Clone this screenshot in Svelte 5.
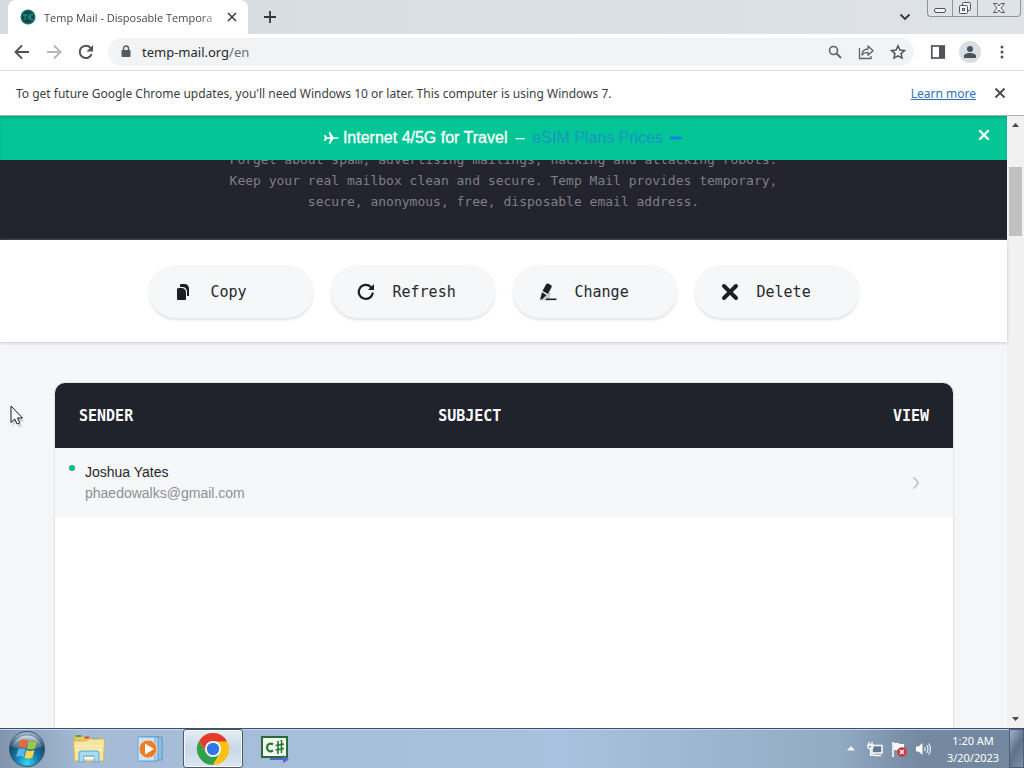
<script>
  const mails = [{ name: 'Joshua Yates', address: 'phaedowalks@gmail.com', subject: '' }];
</script>

<div class="desktop">
  <header class="tabstrip">
    <div class="tab">
      <svg class="favicon" width="16" height="16" viewBox="0 0 16 16" aria-hidden="true">
        <circle cx="8" cy="8" r="7.5" fill="#17736b" />
        <circle cx="8" cy="8" r="6" fill="#134447" />
        <path d="M3 6h4M5 6v5M8.500 10.500v-5M8.500 8h2M13 5.500h-2.500v5H13" fill="none" stroke="#1c8f82" stroke-width="1.300" />
      </svg>
      <span class="tab-title">Temp Mail - Disposable Tempora</span>
      <button class="plain tab-close" aria-label="Close tab">
        <svg width="10" height="10" viewBox="0 0 10 10"><path d="M1 1l8 8M9 1L1 9" stroke="#3c4043" stroke-width="1.6" /></svg>
      </button>
    </div>
    <button class="plain new-tab" aria-label="New tab">
      <svg width="12" height="12" viewBox="0 0 12 12"><path d="M6 0v12M0 6h12" stroke="#33373d" stroke-width="1.8" /></svg>
    </button>
    <button class="plain tab-search" aria-label="Search tabs">
      <svg width="12" height="8" viewBox="0 0 12 8"><path d="M1.5 1.5L6 6l4.500-4.500" fill="none" stroke="#33373d" stroke-width="1.8" /></svg>
    </button>
    <div class="window-controls">
      <button aria-label="Minimize">
        <svg width="14" height="14" viewBox="0 0 14 14"><rect x="1.500" y="7.500" width="11" height="4" rx="1.500" fill="#f2f4f6" stroke="#50565d" /></svg>
      </button>
      <button aria-label="Restore">
        <svg width="14" height="14" viewBox="0 0 14 14"><rect x="4.500" y="1.500" width="8" height="8" rx="1" fill="#eef0f3" stroke="#50565d" /><rect x="1.500" y="4.500" width="8" height="8" rx="1" fill="#f6f7f8" stroke="#50565d" /><rect x="4.500" y="7.500" width="2" height="2" fill="none" stroke="#50565d" /></svg>
      </button>
      <button class="wide" aria-label="Close window">
        <svg width="14" height="14" viewBox="0 0 14 14"><path d="M1.500 2.500h3.500L7 5l2-2.500h3.500L9 7l3.500 4.500H9L7 9l-2 2.500H1.500L5 7z" fill="#f2f4f6" stroke="#50565d" /></svg>
      </button>
    </div>
  </header>

  <nav class="toolbar" aria-label="Browser toolbar">
    <button class="plain" aria-label="Back">
      <svg width="16" height="16" viewBox="0 0 16 16"><path d="M15 8H2M8 1.500L1.500 8 8 14.500" fill="none" stroke="#50545a" stroke-width="1.900" /></svg>
    </button>
    <button class="plain" aria-label="Forward">
      <svg width="16" height="16" viewBox="0 0 16 16"><path d="M1 8h13M8 1.500L14.500 8 8 14.500" fill="none" stroke="#b4b6b9" stroke-width="1.900" /></svg>
    </button>
    <button class="plain" aria-label="Reload">
      <svg width="16" height="16" viewBox="0 0 16 16"><path d="M13.700 10.200A6.200 6.200 0 1 1 12.600 3.800L14 5.200" fill="none" stroke="#50545a" stroke-width="2" /><path d="M15 1v6.500H8.500z" fill="#50545a" /></svg>
    </button>
    <div class="omnibox">
      <svg width="10" height="14" viewBox="0 0 10 14" aria-hidden="true"><rect x="0.500" y="5" width="9" height="7" rx="1" fill="#55595e" /><path d="M2.500 5.500V3.500a2.500 2.500 0 0 1 5 0v2" fill="none" stroke="#55595e" stroke-width="1.400" /></svg>
      <a class="url" href="#address">temp-mail.org<span>/en</span></a>
      <button class="plain" aria-label="Zoom">
        <svg width="14" height="14" viewBox="0 0 14 14"><circle cx="5.500" cy="5.500" r="4" fill="none" stroke="#5f6368" stroke-width="1.600" /><path d="M8.500 8.500l4.500 4.500" stroke="#5f6368" stroke-width="1.800" /></svg>
      </button>
      <button class="plain" aria-label="Share">
        <svg width="16" height="16" viewBox="0 0 16 16"><path d="M1.500 4v10.500h11.500V12" fill="none" stroke="#5f6368" stroke-width="1.300" /><path d="M4 11c.3-4 2.500-6 6-6V2l5 4.700-5 4.500V8.300C7.500 8.300 5.500 9 4 11z" fill="none" stroke="#5f6368" stroke-width="1.300" stroke-linejoin="round" /></svg>
      </button>
      <button class="plain" aria-label="Bookmark this page">
        <svg width="16" height="16" viewBox="0 0 16 16"><path d="M8 1.800l1.900 4.200 4.600.5-3.400 3.100.9 4.500L8 11.800l-4 2.300.9-4.500L1.500 6.500 6.100 6z" fill="none" stroke="#50545a" stroke-width="1.500" /></svg>
      </button>
    </div>
    <button class="plain" aria-label="Side panel">
      <svg width="16" height="16" viewBox="0 0 16 16"><rect x="1.800" y="2" width="12.400" height="12" fill="#fff" stroke="#50545a" stroke-width="1.700" /><path d="M9 2h5v12H9z" fill="#50545a" /></svg>
    </button>
    <button class="plain avatar" aria-label="Profile">
      <svg width="14" height="14" viewBox="0 0 14 14"><circle cx="7" cy="4" r="3" fill="#4b525e" /><path d="M1 13v-2c0-2 3-3 6-3s6 1 6 3v2z" fill="#4b525e" /></svg>
    </button>
    <button class="plain" aria-label="Menu">
      <svg width="16" height="16" viewBox="0 0 16 16"><g fill="#50545a"><circle cx="8" cy="3" r="1.500" /><circle cx="8" cy="8" r="1.500" /><circle cx="8" cy="13" r="1.500" /></g></svg>
    </button>
  </nav>

  <div class="infobar">
    <p>To get future Google Chrome updates, you'll need Windows 10 or later. This computer is using Windows 7.</p>
    <a href="#learn">Learn more</a>
    <button class="plain" aria-label="Dismiss">
      <svg width="12" height="12" viewBox="0 0 12 12"><path d="M1.500 1.500l9 9M10.500 1.500l-9 9" stroke="#44484d" stroke-width="1.800" /></svg>
    </button>
  </div>

  <div class="viewport">
    <main>
      <div class="banner">
        <p>
          <svg width="15" height="14" viewBox="0 0 15 14" aria-hidden="true"><path d="M0 4h1.200L3 6.300H6.200L4.700 1h1.300l3.500 5.300H13q1.800 0 1.800.7t-1.800.7H9.500L6 13H4.700l1.500-5.300H3L1.200 10H0l.8-3z" fill="#fff" /></svg>
          <span class="offer">Internet 4/5G for Travel</span>
          <span class="dash">–</span>
          <a href="#esim">eSIM Plans Prices <svg width="13" height="4" viewBox="0 0 13 4" aria-hidden="true"><path d="M0 .5h10l3 1.500-3 1.500H0z" fill="#0f86e0" /></svg></a>
        </p>
        <button class="plain" aria-label="Close banner">
          <svg width="12" height="12" viewBox="0 0 12 12"><path d="M2 2l8 8M10 2l-8 8" stroke="#fff" stroke-width="2.400" stroke-linecap="round" /></svg>
        </button>
      </div>

      <section class="hero">
        <p>Forget about spam, advertising mailings, hacking and attacking robots.<br />Keep your real mailbox clean and secure. Temp Mail provides temporary,<br />secure, anonymous, free, disposable email address.</p>
      </section>

      <section class="actions">
        <button>
          <svg width="18" height="18" viewBox="0 0 18 18"><path d="M6 1h4q4 .5 4 5v7h-2V8.500Q11.500 4 7.500 4H5V2q0-1 1-1z" fill="#1d1f26" /><path d="M3.500 5H7q4 .5 4 5v6q0 1-1 1H3q-1 0-1-1V6.500Q2 5 3.500 5z" fill="#1d1f26" /></svg>
          <span>Copy</span>
        </button>
        <button>
          <svg width="18" height="18" viewBox="0 0 18 18"><path d="M15.800 9.500A7 7 0 1 1 13.800 4L15 5.200" fill="none" stroke="#1d1f26" stroke-width="2.200" /><path d="M17 1v6h-6z" fill="#1d1f26" /></svg>
          <span>Refresh</span>
        </button>
        <button>
          <svg width="18" height="18" viewBox="0 0 18 18"><path d="M1 17.500h9l2-8-3 1z" fill="#c9ccd0" /><path d="M7 1.500Q7.800 0 9 .500l3 1.500q1.200.8.600 2L9 11 3.500 8z" fill="#1d1f26" /><path d="M3 9.200L7.500 12 4 15.500 1 17z" fill="#1d1f26" /><path d="M7 16.300h10.500" stroke="#1d1f26" stroke-width="1.600" /></svg>
          <span>Change</span>
        </button>
        <button>
          <svg width="18" height="18" viewBox="0 0 18 18"><path d="M3 3l12 12M15 3L3 15" stroke="#1d1f26" stroke-width="4" stroke-linecap="round" /></svg>
          <span>Delete</span>
        </button>
      </section>

      <section class="inbox">
        <div class="card">
          <table>
            <thead>
              <tr><th class="sender">Sender</th><th>Subject</th><th class="view">View</th></tr>
            </thead>
            <tbody>
              {#each mails as mail}
                <tr>
                  <td class="from">
                    <div class="from-row">
                      <i class="dot"></i>
                      <div><div class="name">{mail.name}</div><div class="address">{mail.address}</div></div>
                    </div>
                  </td>
                  <td>{mail.subject}</td>
                  <td class="view">
                    <a href="#mail" aria-label="View message">
                      <svg width="8" height="14" viewBox="0 0 8 14"><path d="M1.500 1.500Q5 4 6 7q-1 3-4.500 5.500" fill="none" stroke="#c3c6ca" stroke-width="2" /></svg>
                    </a>
                  </td>
                </tr>
              {/each}
            </tbody>
          </table>
        </div>
      </section>
    </main>
    <div class="scrollbar" aria-hidden="true">
      <svg width="7" height="4" viewBox="0 0 7 4"><path d="M0 4l3.500-4L7 4z" fill="#4a4a4a" /></svg>
      <div class="track"><div class="thumb"></div></div>
      <svg width="7" height="4" viewBox="0 0 7 4"><path d="M0 0l3.500 4L7 0z" fill="#4a4a4a" /></svg>
    </div>
  </div>

  <footer class="taskbar">
    <button class="plain start" aria-label="Start">
      <svg width="38" height="38" viewBox="0 0 38 38">
        <defs>
          <radialGradient id="orb" cx="50%" cy="90%" r="85%"><stop offset="0" stop-color="#39d8f0" /><stop offset=".4" stop-color="#1379ae" /><stop offset=".75" stop-color="#1c4867" /><stop offset="1" stop-color="#9db4c7" /></radialGradient>
          <linearGradient id="shine" x2="0" y2="1"><stop offset="0" stop-color="#fff" stop-opacity=".7" /><stop offset="1" stop-color="#fff" stop-opacity=".1" /></linearGradient>
        </defs>
        <circle cx="19" cy="19" r="17.500" fill="url(#orb)" stroke="#33536c" />
        <path d="M4 17a15.500 15.500 0 0 1 30 0q-15 5-30 0z" fill="url(#shine)" />
        <path d="M12.500 10.500q4-2 7.500 0l-2 7.500q-3.500-2-7.500 0z" fill="#ee6733" />
        <path d="M21 11q3.500 2 8 0l-2 7.500q-4.500 2-8 0z" fill="#9bc83f" />
        <path d="M10 19.500q4-2 7.500 0l-2 7.500q-3.500-2-7.500 0z" fill="#55b7ec" />
        <path d="M18.500 20q3.500 2 8 0l-2 7.500q-4.500 2-8 0z" fill="#fbd64c" />
      </svg>
    </button>
    <button class="app" aria-label="File Explorer">
      <svg width="34" height="30" viewBox="0 0 34 30">
        <path d="M2 3q0-1 1-1h8l2 2h6l2 1h10v5H2z" fill="#e8c866" stroke="#c5a445" />
        <path d="M4 2h5" stroke="#3ca84a" stroke-width="2" /><path d="M13 3.500h4" stroke="#d8433c" stroke-width="2" /><path d="M21 5h5" stroke="#4a90d9" stroke-width="2" />
        <path d="M1.500 7h13l2-2h16L31.500 27h-29z" fill="#f6e6a0" stroke="#d2b661" />
        <path d="M3 12h29M3 16h28" stroke="#fbf3c8" />
        <path d="M7 28V19q0-2 2-2h16q2 0 2 2v9h-5v-6H12v6z" fill="#a9daf3" stroke="#5ba4cf" />
        <path d="M12 24h10" stroke="#fff" stroke-width="2" />
      </svg>
    </button>
    <button class="app" aria-label="Media Player">
      <svg width="30" height="28" viewBox="0 0 30 28">
        <path d="M8 2h18v23H8z" fill="#90c0e5" stroke="#5b94c5" /><path d="M5 2h17v24H5z" fill="#b6d9f1" stroke="#5b94c5" /><path d="M2 2h17v24H2z" fill="#c9e4f5" stroke="#6fa5ce" />
        <circle cx="12" cy="14" r="9" fill="#ef7d21" stroke="#d7ddea" /><path d="M9 8.500v11l9-5.500z" fill="#fff" />
      </svg>
    </button>
    <button class="app active" aria-label="Google Chrome">
      <svg width="34" height="34" viewBox="0 0 34 34">
        <circle cx="17" cy="17" r="16" fill="#fbc116" />
        <path d="M3.140 9A16 16 0 0 0 17 33L24 21 17 17 10 21z" fill="#2da14c" />
        <path d="M17 9.500h14.100A16 16 0 0 1 17 33l6.500-12z" fill="#fbc116" />
        <path d="M3.140 9A16 16 0 0 1 31.100 9.500H17l-6.500 11.300z" fill="#e33b2e" />
        <circle cx="17" cy="17" r="8" fill="#fff" /><circle cx="17" cy="17" r="6.200" fill="#2f76e8" />
      </svg>
    </button>
    <button class="app" aria-label="C# app">
      <svg width="30" height="28" viewBox="0 0 30 28">
        <rect x="2" y="2" width="25" height="20" fill="#f5faf3" stroke="#286b35" stroke-width="2" />
        <path d="M13 9.500Q11 8 9 9q-2 1-2 3.500T9 16q2 .8 4-.7" fill="none" stroke="#207a2e" stroke-width="2.200" />
        <path d="M18 6v13M21.500 5v13M15.500 10.500l8.500-1.500M15.500 15l8.500-1.500" stroke="#207a2e" stroke-width="1.600" />
        <path d="M10 23h13v-3l6 4.500-6 3.500v-3H10z" fill="#5668c4" />
      </svg>
    </button>
    <div class="tray">
      <svg width="8" height="5" viewBox="0 0 8 5" aria-hidden="true"><path d="M0 4.500L4 0l4 4.500z" fill="#f4f7fa" /></svg>
      <svg width="16" height="16" viewBox="0 0 16 16" aria-hidden="true"><rect x="5" y="4.500" width="10" height="7.500" fill="#62788f" stroke="#fff" stroke-width="1.500" /><path d="M7 14.500h7M2 1v3M5 1v3M1 4h5v2q0 1.500-2.500 1.500T1 6zM3.500 7v7H7" fill="none" stroke="#fff" stroke-width="1.300" /></svg>
      <svg width="16" height="16" viewBox="0 0 16 16" aria-hidden="true"><path d="M2 1v15" stroke="#fff" stroke-width="1.600" /><path d="M3 2h4l2 1h4v7H9L7 9H3z" fill="#fff" /><circle cx="11" cy="11" r="4.800" fill="#d3343b" /><path d="M9 9l4 4M13 9l-4 4" stroke="#fff" stroke-width="1.500" /></svg>
      <svg width="16" height="16" viewBox="0 0 16 16" aria-hidden="true"><path d="M1 5.500h2.500L7.500 2v12l-4-3.500H1z" fill="#fff" /><path d="M9.500 6q1.500 2 0 4M11.500 4q3 4 0 8M13.500 2.500q4 5.500 0 11" fill="none" stroke="#eaf0f5" stroke-width="1.200" /></svg>
    </div>
    <div class="clock"><span>1:20 AM</span><span>3/20/2023</span></div>
    <button class="show-desktop" aria-label="Show desktop"></button>
  </footer>

  <svg class="cursor" width="16" height="24" viewBox="0 0 16 24" aria-hidden="true"><path d="M2.500 4v17l4-3.500 2.500 5 3-1.500-2.500-4.500h5z" fill="#8a8d90" opacity=".35" /><path d="M1 1v16.500l3.700-3.500 2.500 5 2.600-1.200L7.500 13H12.500z" fill="#fff" stroke="#16181c" /></svg>
</div>

<style>
  :global(body) { margin: 0; }
  * { box-sizing: border-box; }
  p { margin: 0; }
  svg { display: block; flex: none; }
  button { font: inherit; color: inherit; padding: 0; cursor: default; }
  .plain { border: 0; background: none; display: flex; align-items: center; justify-content: center; flex: none; }
  .desktop { position: relative; display: flex; flex-direction: column; height: 100vh; overflow: hidden; background: #fff; font-family: "Noto Sans", "Open Sans", sans-serif; font-size: 12px; }

  .tabstrip { flex: none; display: flex; align-items: flex-start; height: 34px; padding: 0 3px 0 8px; background: linear-gradient(90deg, #d6dbe1, #dfe3e9); }
  .tab { display: flex; align-items: center; width: 240px; height: 34px; padding: 0 10px 0 12px; background: #fff; border-radius: 8px 8px 0 0; }
  .favicon { margin-right: 8px; }
  .tab-title { flex: 1; min-width: 0; overflow: hidden; white-space: nowrap; color: #45494e; font-size: 11px; font-family: "Open Sans", sans-serif; mask-image: linear-gradient(90deg, #000 90%, transparent 105%); }
  .tab-close { width: 12px; height: 16px; margin-left: 8px; }
  .new-tab { width: 44px; height: 34px; }
  .tab-search { width: 28px; height: 34px; margin: 0 8px 0 auto; }
  .window-controls { display: flex; height: 17px; border: 1px solid #8e949b; border-top: 0; border-radius: 0 0 4px 4px; background: #dfe3e8; }
  .window-controls button { display: flex; align-items: center; justify-content: center; width: 25px; border: 0; border-right: 1px solid #8e949b; background: none; }
  .window-controls .wide { width: 42px; border-right: 0; }

  .toolbar { flex: none; display: flex; align-items: center; gap: 16px; height: 37px; padding: 0 14px; border-bottom: 1px solid #dcddde; background: #fff; }
  .omnibox { flex: 1; display: flex; align-items: center; height: 28px; gap: 16px; margin-left: -2px; padding: 0 8px 0 13px; border-radius: 14px; background: #f1f3f4; }
  .url { flex: 1; margin-left: -5px; color: #25282c; font-size: 13px; text-decoration: none; }
  .url span { color: #686c70; }
  .avatar { width: 22px; height: 22px; margin: 0 -3px; border-radius: 50%; background: #dadde2; }

  .infobar { flex: none; display: flex; align-items: center; height: 45px; padding: 0 18px 0 16px; color: #3b3e42; border-bottom: 1px solid #9db3ad; }
  .infobar p { flex: 1; white-space: nowrap; }
  .infobar a { margin-right: 18px; color: #2e6fc4; }

  .viewport { flex: 1; min-height: 0; display: flex; }
  main { flex: 1; min-width: 0; display: flex; flex-direction: column; background: #f5f6f8; }
  .banner { flex: none; display: flex; align-items: center; height: 44px; padding: 0 17px; background: #04c596; color: #fff; font: 16px "Liberation Sans", Arial, sans-serif; box-shadow: inset 0 2px 2px #0aa880; }
  .banner p { flex: 1; display: flex; align-items: center; justify-content: center; gap: 8px; padding-left: 12px; }
  .banner .offer { margin-left: -4px; -webkit-text-stroke: 0.3px #fff; }
  .banner a { display: inline-flex; align-items: center; gap: 7px; color: #1696c4; text-decoration: none; }
  .banner button { align-self: flex-start; height: 38px; }
  .hero { flex: none; display: flex; align-items: flex-end; justify-content: center; height: 80px; padding-bottom: 28px; overflow: hidden; background: #23242e; color: #7e7f87; font: 13px/21px "DejaVu Sans Mono", monospace; text-align: center; }

  .actions { flex: none; display: grid; grid-template-columns: repeat(4, minmax(0, 164px)); justify-content: center; gap: 18px; padding: 25px 16px 24px; background: #fff; box-shadow: 0 1px 3px #c8cbcf; z-index: 1; }
  .actions button { display: flex; align-items: center; gap: 18px; height: 53px; padding: 0 0 0 26px; border: 0; border-radius: 27px; background: #f5f7f8; color: #25272d; font: 15px "DejaVu Sans Mono", monospace; box-shadow: 0 2px 3px #dfe2e5; }

  .inbox { flex: 1; min-height: 0; display: flex; flex-direction: column; padding: 41px 54px 0 55px; }
  .card { flex: 1; overflow: hidden; border-radius: 10px 10px 0 0; background: #fff; box-shadow: 0 0 1px 1px #e2e4e7; }
  table { width: 100%; table-layout: fixed; border-collapse: collapse; }
  th { height: 65px; padding: 0 24px; background: #20222c; color: #fff; font: bold 15px "DejaVu Sans Mono", monospace; text-align: left; text-transform: uppercase; }
  .sender { width: 40%; }
  th.view, td.view { text-align: right; }
  td { height: 69px; padding: 0 33px 0 24px; background: #f6f7f9; font: 14px/21px "Liberation Sans", Arial, sans-serif; }
  td.from { padding-left: 14px; }
  .from-row { display: flex; gap: 10px; }
  .dot { width: 6px; height: 6px; margin-top: 3px; border-radius: 50%; background: #12b886; }
  .name { color: #25272d; }
  .address { color: #8c9095; }
  .view a { display: inline-block; vertical-align: middle; }

  .scrollbar { flex: none; display: flex; flex-direction: column; align-items: center; width: 17px; padding: 7px 0; background: #f1f1f1; }
  .track { flex: 1; width: 100%; padding: 40px 2px 0; }
  .thumb { height: 69px; background: #c1c1c1; }

  .taskbar { flex: none; display: flex; align-items: stretch; height: 40px; border-top: 1px solid #34516e; background: linear-gradient(90deg, #8395ad 0, #a5bbd6 8%, #a9c1de 55%, #93aac4 82%, #7488a0 90%, #73879e); box-shadow: inset 0 1px #c6d6e7; }
  .start { width: 54px; }
  .app { display: flex; align-items: center; justify-content: center; width: 60px; margin-right: 2px; border: 1px solid transparent; background: none; }
  .start + .app { margin-left: 5px; }
  .active { border-color: #4b596b; border-radius: 3px; background: linear-gradient(#e7edf4, #c9d7e6 50%, #dbe7f2); box-shadow: inset 0 0 0 1px #f6f9fc; }
  .tray { display: flex; align-items: center; gap: 8px; margin-left: auto; }
  .tray svg:first-child { margin-right: 4px; }
  .clock { display: flex; flex-direction: column; align-items: center; justify-content: center; width: 78px; padding-left: 6px; color: #fff; line-height: 17px; font-size: 11px; }
  .show-desktop { width: 15px; border: 1px solid #4c6078; background: linear-gradient(120deg, #a3b2c3, #5e7188 50%, #7d90a5); }
  .cursor { position: absolute; left: 10px; top: 405px; z-index: 2; }
</style>
